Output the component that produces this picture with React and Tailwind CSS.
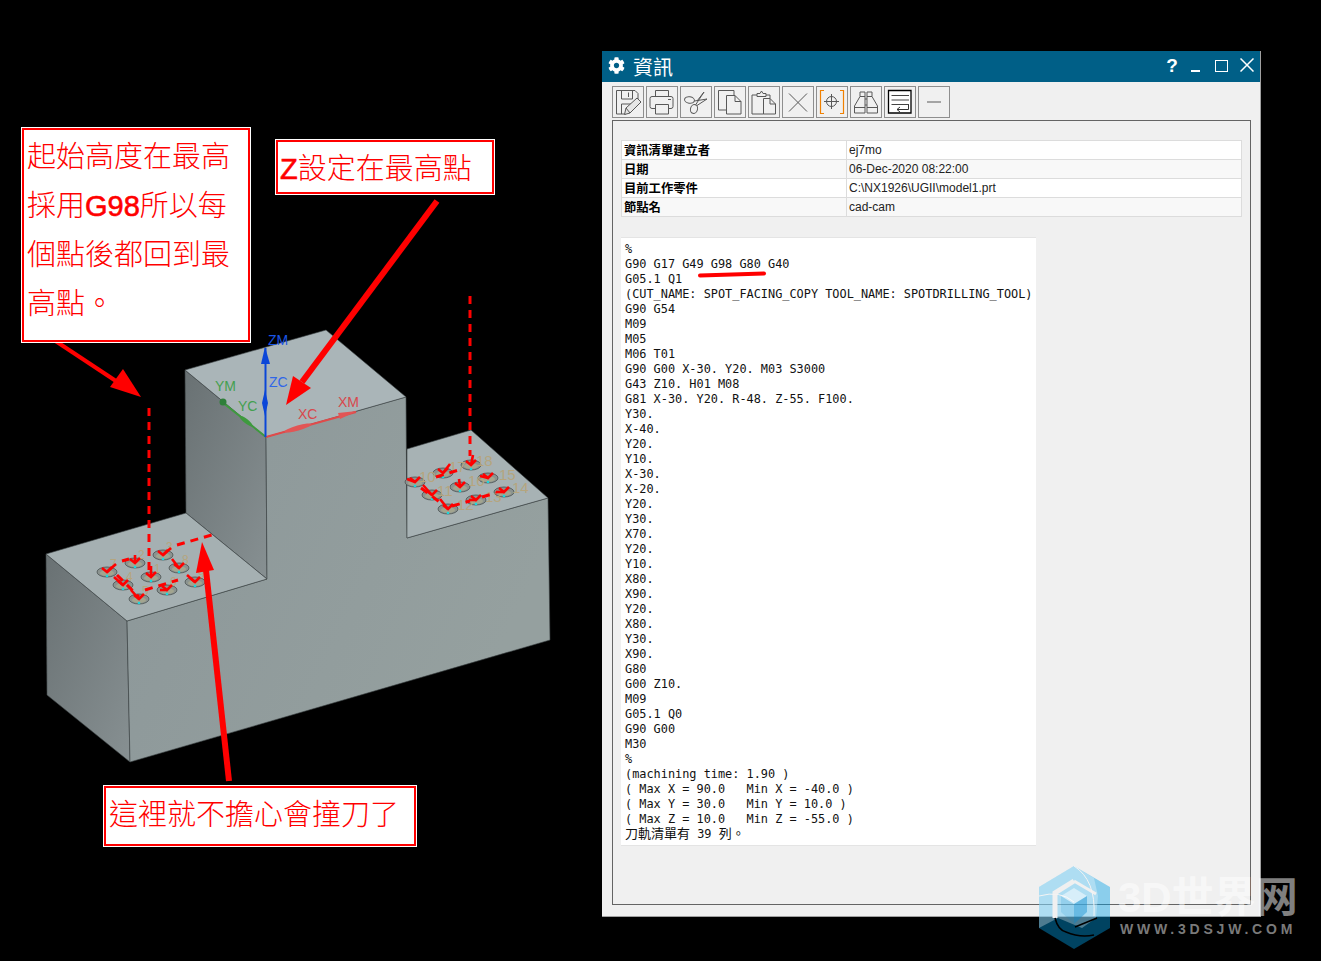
import React from "react";
import { FaCog } from "react-icons/fa";

const S = ({ children }) => (
  <svg viewBox="0 0 30 30" width="30" height="30" fill="none" stroke="#585858" strokeWidth="1" strokeLinejoin="round">{children}</svg>
);
const icons = [
  <S key="1"><path d="M13 27H3.500V3.500H22L25 6.500V14" /><path d="M8.500 3.500V12H19.500V3.500M15.500 5.500V10M8.500 27V17H18" /><path d="M11.500 27.500L13 21L24 11L28 15L17 26z" fill="#e6e6e6" /><path d="M13 21L17 26" /></S>,
  <S key="2"><path d="M8.500 9.500V3.500H21.500V9.500" /><path d="M8 21.500H5a2 2 0 0 1-2-2V11.500a2 2 0 0 1 2-2H24a2 2 0 0 1 2 2V19.500a2 2 0 0 1-2 2H22" /><path d="M8.500 17.500H21.500V27H8.500z" /><path d="M21 12.500H24" /></S>,
  <S key="3"><ellipse cx="8.500" cy="13" rx="5" ry="3.200" transform="rotate(10 8.500 13)" /><ellipse cx="13" cy="22" rx="3.500" ry="4.500" transform="rotate(15 13 22)" /><path d="M13.500 14L26 12L16 18.500M14.500 18L23 5L16 14" /></S>,
  <S key="4"><path d="M11.500 23H3.500V3.500H19V8.500" /><path d="M11.500 8.500H20L26 14.500V27H11.500z" /><path d="M20 8.500V14.500H26" /></S>,
  <S key="5"><path d="M14.500 27H3V8H8M21 8V11.500M17 8H21" /><path d="M8 9.500V6.500H11L12.500 4L14 6.500H17V9.500z" /><path d="M14.500 11.500H21L26.500 17V27H14.500z" /><path d="M21 11.500V17H26.500" /></S>,
  <S key="6"><path d="M6 6.500L24 24.500M24 6.500L6 24.500" /></S>,
  <S key="7"><path d="M7 3.500H3.500V26.500H7M23 3.500H26.500V26.500H23" stroke="#f08000" strokeWidth="1.200" strokeLinejoin="miter" /><circle cx="14.500" cy="14.500" r="5" /><path d="M14.500 7V22M7 14.500H22" /></S>,
  <S key="8"><path d="M3.500 26V19L9 9.500V5H14V26zM26.500 26V19L21 9.500V5H16V26zM14 12H16M14 18H16M3.500 20.500H14M16 20.500H26.500M9 9.500H14M16 9.500H21" /></S>,
  <svg key="9" viewBox="0 0 30 30" width="30" height="30" fill="none"><path d="M3.500 3.500H26V26H3.500z" fill="#fff" stroke="#000" strokeWidth="1.300" /><path d="M6.500 8.500H24M6.500 13H24M6.500 17.500H24" stroke="#444" /><path d="M23.500 18V22.500H12M15 20L12 22.500L15 25" stroke="#333" /></svg>,
  <S key="10"><path d="M8 15H22" /></S>,
];

const code = `%
G90 G17 G49 G98 G80 G40
G05.1 Q1
(CUT_NAME: SPOT_FACING_COPY TOOL_NAME: SPOTDRILLING_TOOL)
G90 G54
M09
M05
M06 T01
G90 G00 X-30. Y20. M03 S3000
G43 Z10. H01 M08
G81 X-30. Y20. R-48. Z-55. F100.
Y30.
X-40.
Y20.
Y10.
X-30.
X-20.
Y20.
Y30.
X70.
Y20.
Y10.
X80.
X90.
Y20.
X80.
Y30.
X90.
G80
G00 Z10.
M09
G05.1 Q0
G90 G00
M30
%
(machining time: 1.90 )
( Max X = 90.0   Min X = -40.0 )
( Max Y = 30.0   Min Y = 10.0 )
( Max Z = 10.0   Min Z = -55.0 )`.split("\n");

const rows = [
  ["資訊清單建立者", "ej7mo", "bg-white"],
  ["日期", "06-Dec-2020 08:22:00", "bg-[#f8f8f8]"],
  ["目前工作零件", "C:\\NX1926\\UGII\\model1.prt", "bg-white"],
  ["節點名", "cad-cam", "bg-[#f8f8f8]"],
];

// x, y, label, tail dx, tail dy, label dx, label baseline dy
const holesL = [
  [107,572,"7",9,-8,3,-4],[135,563,"2",0,-8,3,-4],[163,555,"3",8,-7,3,-4],
  [123,585,"4",-9,-8,3,-4],[151,577,"1",0,-11,3,-4],[179,568,"8",-7,-9,3,-4],
  [139,599,"5",-8,-9,3,-4],[167,590,"6",-7,0,3,-4],[195,582,"9",-8,-7,3,-4],
];
const holesR = [
  [415,482,"10",-8,-3,4,0],[443,473,"17",7,-9,6,-1],[471,465,"18",2,-10,5,1],
  [432,495,"11",-9,-10,5,1],[460,487,"16",-1,-8,8,-1],[488,478,"15",-8,-2,11,2],
  [448,509,"12",-8,-10,9,1],[476,500,"13",-7,0,9,2],[504,492,"14",-8,0,8,1],
];

function Holes({ list, size }) {
  return (
    <g>
      {list.map(([x, y, n]) => (
        <g key={n}>
          <ellipse cx={x} cy={y} rx="10" ry="5" fill="#8b9390" stroke="#4a5050" strokeWidth="0.8" />
          <ellipse cx={x} cy={y + 1} rx="7" ry="3" fill="#a3a58f" />
        </g>
      ))}
      {list.map(([x, y, n, , , lx, ly]) => (
        <text key={n} x={x + lx} y={y + ly} fontSize={size} fill="#b5a57e" fontFamily="Liberation Sans">{n}</text>
      ))}
      {list.map(([x, y, n, tx, ty]) => (
        <g key={n}>
          <circle cx={x} cy={y + 4} r="1.300" fill="#19d8e0" />
          <path d={`M${x + tx} ${y + ty}L${x} ${y}`} stroke="#f00" strokeWidth="2.600" fill="none" />
          <path d={`M${x + 5} ${y - 5}L${x} ${y}L${x - 5} ${y - 4}`} stroke="#f00" strokeWidth="2.600" fill="none" />
        </g>
      ))}
    </g>
  );
}

function Drawing() {
  return (
    <svg width="600" height="800" viewBox="0 0 600 800" className="absolute left-0 top-0" fontFamily="Liberation Sans">
      <defs>
        <linearGradient id="dk" x1="0" y1="0" x2="1" y2="1">
          <stop offset="0" stopColor="#697173" />
          <stop offset="1" stopColor="#879092" />
        </linearGradient>
        <linearGradient id="fr" x1="0" y1="0" x2="1" y2="0.4">
          <stop offset="0" stopColor="#8c9799" />
          <stop offset="1" stopColor="#95a09f" />
        </linearGradient>
      </defs>
      <g stroke="#3d4345" strokeWidth="0.6">
        <polygon points="46,554 127,621 130,762 47,695" fill="url(#dk)" />
        <polygon points="185,370 266,437 267,579 186,513" fill="url(#dk)" />
        <polygon points="266,437 406,397 407,538 548,498 550,640 130,762 127,621 267,579" fill="url(#fr)" />
        <polygon points="46,554 186,513 267,579 127,621" fill="#a5b0b2" />
        <polygon points="185,370 326,330 406,397 266,437" fill="#aab5b8" />
        <polygon points="407,449 471,430 548,498 407,538" fill="#a7b2b4" />
      </g>
      <Holes list={holesL} size={12} />
      <Holes list={holesR} size={15} />

      <g stroke="#f00" strokeWidth="3" fill="none" strokeDasharray="8 6">
        <path d="M149 408V572" />
        <path d="M117 575L139 597M145 590L178 580M122 561L129 559M177 545L215 534" />
        <path d="M470 296V456" />
        <path d="M421 488L441 503M452 506L470 501M482 497L496 493M436 477L462 469" />
      </g>

      <path d="M266 437L222 402" stroke="#3e9a3e" strokeWidth="2" />
      <ellipse cx="246" cy="421" rx="8" ry="2.200" transform="rotate(38 246 421)" fill="#3e9a3e" />
      <circle cx="223" cy="402" r="3.500" fill="#2f7f3a" />
      <path d="M266 437L356 412" stroke="#e04a4a" strokeWidth="2" />
      <ellipse cx="298" cy="428" rx="14" ry="2.500" transform="rotate(-16 298 428)" fill="#e25555" />
      <path d="M357 411L338 413L340 419z" fill="#e25555" />
      <path d="M265.500 437V348" stroke="#0b46d8" strokeWidth="2" />
      <path d="M265 347L261 364H270z" fill="#0b46d8" />
      <path d="M265 390L262 403L265 416L268 403z" fill="#0b46d8" />
      <g fontSize="14">
        <text x="268" y="345" fill="#1a55e6">ZM</text>
        <text x="269" y="387" fill="#2f66e8">ZC</text>
        <text x="215" y="391" fill="#44a04f">YM</text>
        <text x="238" y="411" fill="#44a04f">YC</text>
        <text x="298" y="419" fill="#d8484c">XC</text>
        <text x="338" y="407" fill="#d8484c">XM</text>
      </g>

      <path d="M54 340L125 387" stroke="#f00" strokeWidth="4" />
      <path d="M141 397L110 387L123 369z" fill="#f00" />
      <path d="M437 201L302 382" stroke="#f00" strokeWidth="6" />
      <path d="M286 405L293 376L311 388z" fill="#f00" />
      <path d="M229 781L206 570" stroke="#f00" strokeWidth="6" />
      <path d="M202 542L196 573L214 570z" fill="#f00" />
    </svg>
  );
}

function Callout({ className, children }) {
  return (
    <div className={`absolute border-2 border-[#f00] bg-white text-[#f00] text-[29px] font-light font-['Liberation_Sans','Noto_Sans_CJK_TC',sans-serif] outline outline-1 outline-white ${className}`}>
      {children}
    </div>
  );
}

function Logo() {
  return (
    <svg width="74" height="84" viewBox="0 0 74 84" className="absolute left-[1038px] top-[866px]">
      <polygon points="36,0 72,21 72,62 36,83 1,62 1,21" fill="#00a0e8" opacity="0.42" />
      <polygon points="36,0 56,12 60,30 58,52 44,62 20,52 1,62 1,21" fill="#fff" opacity="0.3" />
      <path d="M36 15L17 27V52" stroke="#f0f0f0" strokeWidth="5" fill="none" />
      <path d="M36 15L58 28" stroke="#f0f0f0" strokeWidth="3" fill="none" />
      <path d="M1 30Q22 24 36 36M36 0Q58 14 56 50" stroke="#f4f4f4" strokeWidth="1" fill="none" />
      <polygon points="36,22 49,30 36,38 23,30" fill="#fff" opacity="0.5" />
      <polygon points="36,38 49,30 49,46 36,58" fill="#0088cc" opacity="0.4" />
      <polygon points="23,30 36,38 36,58 23,46" fill="#0088cc" opacity="0.15" />
      <path d="M17 52Q20 64 28 66Q42 72 56 69M37 61L59 52" stroke="#000" strokeWidth="1.600" fill="none" />
    </svg>
  );
}

export default function App() {
  return (
    <div className="relative w-[1321px] h-[961px] bg-black overflow-hidden font-['Liberation_Sans','Noto_Sans_CJK_TC',sans-serif]">
      <Drawing />

      <Callout className="left-[22px] top-[128px] w-[228px] h-[214px] pl-[3px] pt-[3px] leading-[49px]">
        <div>起始高度在最高</div>
        <div>採用<span className="font-normal [-webkit-text-stroke:0.6px_#f00]">G98</span>所以每</div>
        <div>個點後都回到最</div>
        <div>高點。</div>
      </Callout>
      <Callout className="left-[276px] top-[140px] w-[218px] h-[54px] pl-[2px] leading-[55px]"><span className="font-normal [-webkit-text-stroke:0.6px_#f00]">Z</span>設定在最高點</Callout>
      <Callout className="left-[104px] top-[786px] w-[312px] h-[60px] pl-[3px] leading-[55px]">這裡就不擔心會撞刀了</Callout>

      <div className="absolute left-[602px] top-[51px] w-[659px] h-[866px] flex flex-col bg-[#f0f0f0] border-r border-b border-[#a0a0a0]">
        <div className="h-[31px] shrink-0 bg-[#005f87] flex items-center text-white pl-[6px] pr-[6px]">
          <FaCog size={17} className="mb-[3px]" />
          <span className="ml-[8px] text-[20px] leading-[31px] mt-[4px]">資訊</span>
          <span className="ml-auto w-[14px] text-center font-bold text-[19px] leading-none mb-[3px]">?</span>
          <span className="ml-[12px] w-[9px] h-[2px] bg-white mt-[9px]" />
          <span className="ml-[15px] w-[13px] h-[12px] border border-white mb-[2px]" />
          <svg width="14" height="14" viewBox="0 0 14 14" className="ml-[12px] mb-[4px]">
            <path d="M0.500 0.500L13.500 13.500M13.500 0.500L0.500 13.500" stroke="#fff" strokeWidth="1.500" />
          </svg>
        </div>

        <div className="flex gap-[2px] pl-[10px] pt-[4px] h-[38px] shrink-0">
          {icons.map((ic, i) => (
            <div key={i} className="w-[32px] h-[32px] border border-[#8e8e8e] flex items-center justify-center">{ic}</div>
          ))}
        </div>

        <div className="ml-[10px] mr-[9px] h-[785px] border border-[#646464] pl-[8px] pr-[8px] pt-[19px]">
          <div className="border border-[#dcdcdc] border-b-0 w-[621px] text-[12px] leading-[18px] text-[#222]">
            {rows.map(([a, b, bg]) => (
              <div key={a} className={`flex h-[19px] border-b border-[#dcdcdc] ${bg}`}>
                <div className="w-[225px] pl-[2px] border-r border-[#dcdcdc] text-[12.300px] font-bold text-black font-['Noto_Sans_CJK_TC',sans-serif]">{a}</div>
                <div className="pl-[2px]">{b}</div>
              </div>
            ))}
          </div>

          <div className="relative mt-[20px] w-[415px] h-[609px] bg-white border-t border-b border-[#e4e4e4] pl-[4px] pt-[4px]">
            {code.map((l, i) => (
              <div key={i} className="h-[15px] leading-[15px] whitespace-pre text-[#111] text-[11.880px] font-['DejaVu_Sans_Mono',monospace]">{l}</div>
            ))}
            <div className="h-[15px] -mt-[2px] leading-[15px] whitespace-pre text-[#111] text-[11.880px] font-['DejaVu_Sans_Mono',monospace]">
              <span className="text-[13px] font-['Noto_Sans_CJK_TC',sans-serif]">刀軌清單有</span> 39 <span className="text-[13px] font-['Noto_Sans_CJK_TC',sans-serif]">列。</span>
            </div>
            <svg width="80" height="8" className="absolute left-[76px] top-[32px]">
              <path d="M3 5.500L67 3.500" stroke="#f00" strokeWidth="4" strokeLinecap="round" />
            </svg>
          </div>
        </div>
      </div>

      <Logo />
      <div className="absolute left-[1118px] top-[875px] leading-[46px] text-[42px] font-bold text-white/50 font-['Liberation_Sans','Noto_Sans_CJK_SC',sans-serif] whitespace-nowrap">3D世界网</div>
      <div className="absolute left-[1120px] top-[921px] leading-[16px] text-[14px] font-bold text-[#7a7a7a] tracking-[3.800px] whitespace-nowrap">WWW.3DSJW.COM</div>
    </div>
  );
}
